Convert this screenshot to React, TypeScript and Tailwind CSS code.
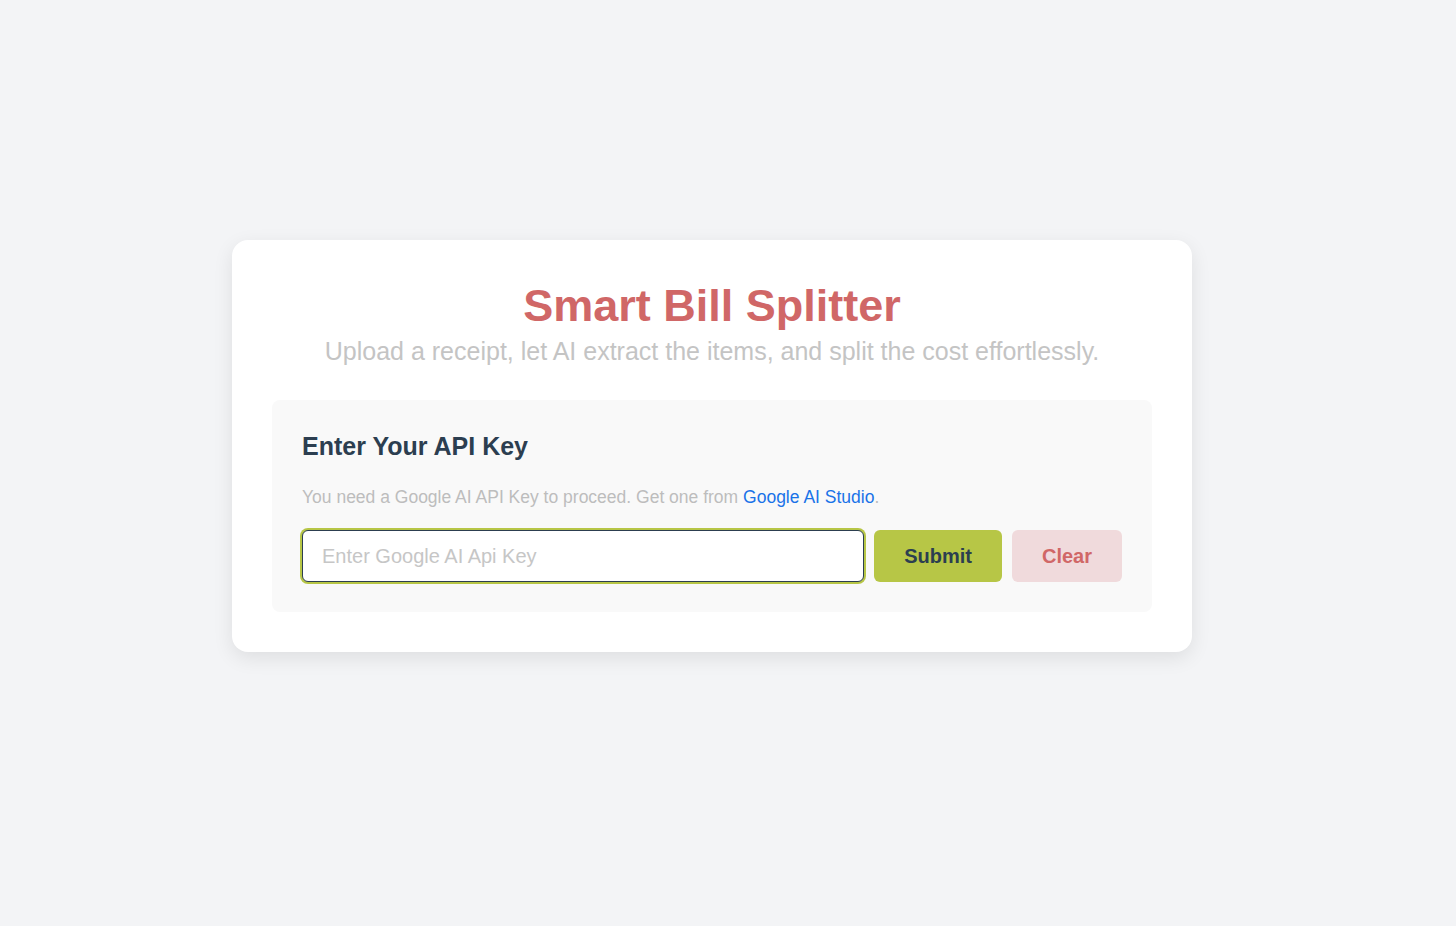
import React from "react";

export default function App() {
  return (
    <div
      className="min-h-[926px] w-full bg-[#f3f4f6] pt-[240px]"
      style={{ fontFamily: '"Liberation Sans", Arial, sans-serif' }}
    >
      <div className="ml-[232px] w-[960px] rounded-[16px] bg-white p-[40px] shadow-[0_6px_20px_rgba(0,0,0,0.09)]">
        <h1 className="text-center text-[45px] font-bold leading-[52px] text-[#d06767]">
          Smart Bill Splitter
        </h1>
        <p className="mt-[5px] text-center text-[25px] leading-[28px] text-[#c4c4c4]">
          Upload a receipt, let AI extract the items, and split the cost effortlessly.
        </p>
        <div className="mt-[35px] rounded-[8px] bg-[#f9f9f9] p-[30px]">
          <h2 className="text-[25px] font-bold leading-[32px] text-[#2c3e50]">
            Enter Your API Key
          </h2>
          <p className="mt-[23px] text-[17.5px] leading-[24px] text-[#bdbdbd]">
            You need a Google AI API Key to proceed. Get one from{" "}
            <a href="#" className="text-[#1a73e8]">
              Google AI Studio
            </a>
            .
          </p>
          <div className="mt-[21px] flex gap-[10px]">
            <input
              type="text"
              autoFocus
              placeholder="Enter Google AI Api Key"
              className="h-[52px] flex-1 rounded-[6px] border border-[#2c3e50] bg-white px-[19px] text-[20px] text-[#2c3e50] caret-[#2c3e50] outline-none ring-2 ring-[#b7c646] placeholder:text-[#c6c6c6]"
            />
            <button className="h-[52px] rounded-[6px] bg-[#b7c646] px-[30px] text-[20px] font-bold text-[#2c3e50]">
              Submit
            </button>
            <button className="h-[52px] rounded-[6px] bg-[#f0dadc] px-[30px] text-[20px] font-bold text-[#d06767]">
              Clear
            </button>
          </div>
        </div>
      </div>
    </div>
  );
}
